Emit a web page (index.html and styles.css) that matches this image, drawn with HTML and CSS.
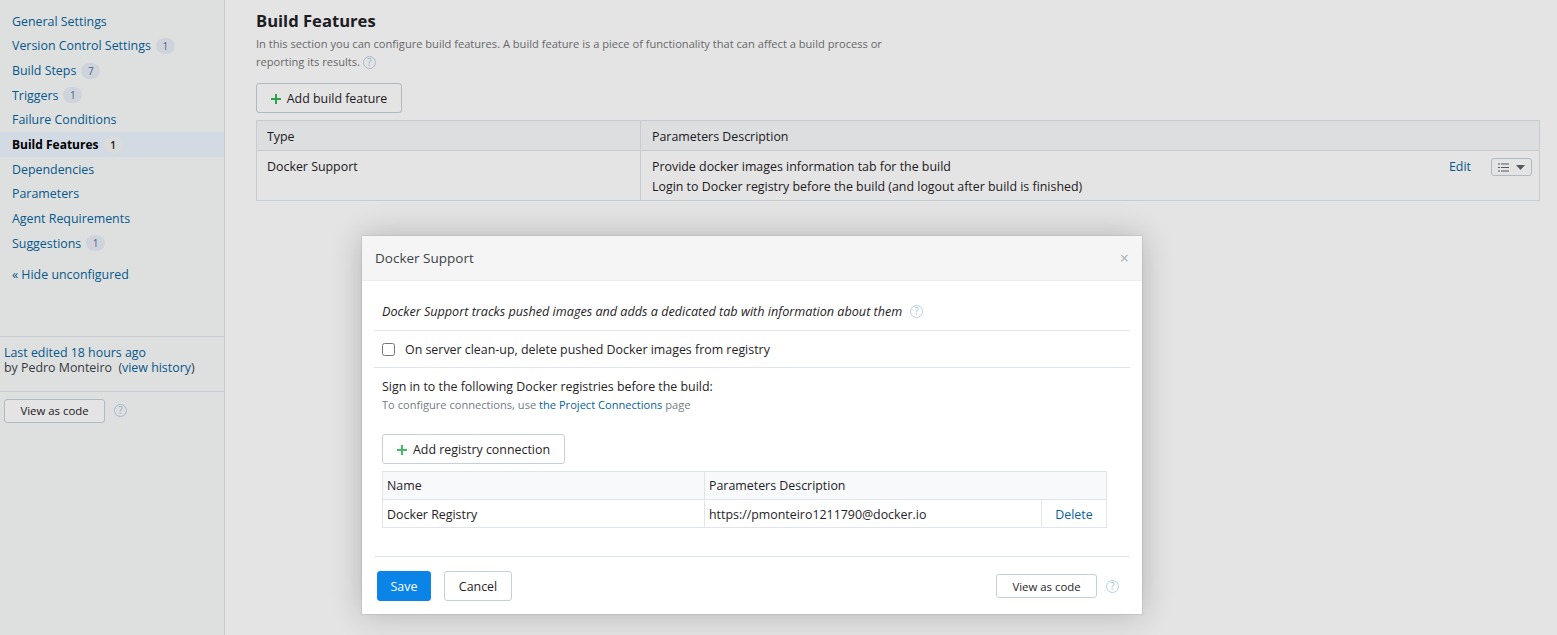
FILE: index.html
```html
<!DOCTYPE html>
<html>
<head>
<meta charset="UTF-8">
<title>Build Features</title>
<link rel="stylesheet" href="styles.css">
</head>
<body>
<div class="page">
    <div class="sidebar">
        <ul class="nav">
            <li><a href="#">General Settings</a></li>
            <li><a href="#">Version Control Settings</a><span class="count">1</span></li>
            <li><a href="#">Build Steps</a><span class="count">7</span></li>
            <li><a href="#">Triggers</a><span class="count">1</span></li>
            <li><a href="#">Failure Conditions</a></li>
            <li class="selected"><a href="#">Build Features</a><span class="count">1</span></li>
            <li><a href="#">Dependencies</a></li>
            <li><a href="#">Parameters</a></li>
            <li><a href="#">Agent Requirements</a></li>
            <li><a href="#">Suggestions</a><span class="count">1</span></li>
        </ul>
        <a href="#" class="hide-link">« Hide unconfigured</a>
        <div class="edited">
            <a href="#">Last edited 18 hours ago</a><br>
            by Pedro Monteiro &nbsp;(<a href="#">view history</a>)
        </div>
        <div class="code-row">
            <button class="btn side-code">View as code</button>
            <span class="help">?</span>
        </div>
    </div>

    <div class="main">
        <h2>Build Features</h2>
        <p class="intro">In this section you can configure build features. A build feature is a piece of functionality that can affect a build process or<br>reporting its results. <span class="help">?</span></p>
        <button class="btn add-feature">
            <svg class="plus" width="10" height="10" viewBox="0 0 10 10"><path d="M5 0v10M0 5h10" stroke="#33b558" stroke-width="2" fill="none"/></svg>Add build feature
        </button>
        <table class="features">
            <tr>
                <th class="type-col">Type</th>
                <th class="desc-col" colspan="3">Parameters Description</th>
            </tr>
            <tr>
                <td class="type-col">Docker Support</td>
                <td class="desc-col">Provide docker images information tab for the build<br>Login to Docker registry before the build (and logout after build is finished)</td>
                <td class="edit-col"><a href="#">Edit</a></td>
                <td class="menu-col">
                    <button class="menu-btn">
                        <svg width="11" height="9" viewBox="0 0 11 9"><path d="M0 1h2M3 1h8M0 4.5h2M3 4.5h8M0 8h2M3 8h8" stroke="#5f6368" stroke-width="1.2" fill="none"/></svg>
                        <svg width="9" height="5" viewBox="0 0 9 5"><path d="M0 0h9L4.5 5z" fill="#5f6368"/></svg>
                    </button>
                </td>
            </tr>
        </table>
    </div>
</div>

<div class="overlay"></div>

<div class="dialog">
    <div class="dialog-head">
        <span class="dialog-title">Docker Support</span>
        <span class="close">×</span>
    </div>
    <div class="dialog-body">
        <div class="section note"><em>Docker Support tracks pushed images and adds a dedicated tab with information about them</em><span class="help">?</span></div>
        <div class="section check">
            <input type="checkbox" id="cleanup">
            <label for="cleanup">On server clean-up, delete pushed Docker images from registry</label>
        </div>
        <div class="section registries">
            <div class="sign-in">Sign in to the following Docker registries before the build:</div>
            <div class="small">To configure connections, use <a href="#">the Project Connections</a> page</div>
            <button class="btn add-registry">
                <svg class="plus" width="10" height="10" viewBox="0 0 10 10"><path d="M5 0v10M0 5h10" stroke="#45bb66" stroke-width="2" fill="none"/></svg>Add registry connection
            </button>
            <table class="connections">
                <tr>
                    <th class="name-col">Name</th>
                    <th colspan="2">Parameters Description</th>
                </tr>
                <tr>
                    <td class="name-col">Docker Registry</td>
                    <td>https://pmonteiro1211790@docker.io</td>
                    <td class="delete-col"><a href="#">Delete</a></td>
                </tr>
            </table>
        </div>
        <div class="dialog-foot">
            <button class="btn save">Save</button>
            <button class="btn cancel">Cancel</button>
            <div class="foot-right">
                <button class="btn foot-code">View as code</button>
                <span class="help">?</span>
            </div>
        </div>
    </div>
</div>
</body>
</html>
```

FILE: styles.css
```css
html, body {
    margin: 0;
    padding: 0;
    height: 100%;
    overflow: hidden;
}
body {
    font-family: "Open Sans", "Noto Sans", Arial, sans-serif;
    font-size: 12.4px;
    color: #1f2328;
    background-color: #fff;
}
a {
    color: #08639c;
    text-decoration: none;
}
.page {
    display: flex;
    height: 635px;
}
.overlay {
    position: absolute;
    top: 0;
    left: 0;
    width: 100%;
    height: 100%;
    background-color: rgba(0,0,0,0.105);
}

/* left column */
.sidebar {
    width: 224px;
    flex: none;
    background-color: #f9fbfb;
    border-right: 1px solid #dfe5eb;
}
.nav {
    list-style: none;
    margin: 0;
    padding: 9px 0 0;
}
.nav li {
    display: flex;
    align-items: center;
    height: 24.67px;
    padding-left: 12px;
}
.nav .selected {
    background-color: #ebf4ff;
}
.nav .selected a {
    color: #000;
    font-weight: 700;
    font-size: 12px;
}
.count {
    margin-left: 5px;
    min-width: 9px;
    padding: 0 5px;
    height: 16px;
    line-height: 16px;
    border-radius: 8px;
    font-size: 10px;
    text-align: center;
    color: #5a6a9a;
    background-color: #e8eef6;
}
.selected .count {
    color: #1f2328;
    background-color: #f5f5f5;
    font-weight: 600;
}
.hide-link {
    display: block;
    margin: 10px 0 0 12px;
}
.edited {
    margin-top: 53px;
    padding: 8px 0 16px 4px;
    border-top: 1px solid #dfe5eb;
    border-bottom: 1px solid #dfe5eb;
    line-height: 15px;
    color: #3d4349;
}
.code-row {
    display: flex;
    align-items: center;
    padding: 7px 0 0 4px;
}
.btn {
    font-family: inherit;
    font-size: 12.4px;
    color: #1f2328;
    background-color: #fff;
    border: 1px solid #c5d0dc;
    border-radius: 3px;
    padding: 0;
    box-sizing: border-box;
}
.side-code {
    width: 101px;
    height: 24px;
    font-size: 11.4px;
}
.help {
    display: inline-block;
    width: 11px;
    height: 11px;
    line-height: 11px;
    border: 1.5px solid #b8d0e8;
    border-radius: 50%;
    font-size: 10px;
    text-align: center;
    color: #a9c4df;
}
.code-row .help {
    margin-left: 9px;
}

/* main column */
.main {
    flex: 1;
    padding: 0 17px 0 31px;
}
h2 {
    margin: 9px 0 0;
    font-size: 16.6px;
    line-height: 24px;
    font-weight: 700;
    color: #1f2328;
}
.intro {
    margin: 2px 0 0;
    font-size: 11.1px;
    line-height: 18px;
    color: #737577;
}
.add-feature {
    display: block;
    width: 146px;
    height: 30px;
    margin-top: 12px;
}
.plus {
    margin-right: 6px;
    vertical-align: -1px;
}
.features {
    width: 100%;
    margin-top: 7px;
    border-collapse: collapse;
    border: 1px solid #dfe5eb;
}
.features th {
    height: 28px;
    padding: 1px 10px 0;
    font-weight: 400;
    text-align: left;
    background-color: #f7f9fa;
    border: 1px solid #dfe5eb;
}
.features td {
    padding: 6px 10px 3px;
    line-height: 20px;
    vertical-align: top;
}
.features .type-col {
    width: 363px;
    border-right: 1px solid #dfe5eb;
}
.features .desc-col {
    padding-left: 11px;
}
.features .edit-col {
    width: 22px;
    padding: 6px 2px 3px 10px;
}
.features .menu-col {
    width: 41px;
    padding: 7px 7px 0 18px;
}
.menu-btn {
    display: flex;
    align-items: center;
    justify-content: center;
    gap: 7px;
    width: 41px;
    height: 18px;
    padding: 0;
    background-color: #fff;
    border: 1px solid #c5d0dc;
    border-radius: 3px;
}

/* dialog */
.dialog {
    position: absolute;
    left: 362px;
    top: 236px;
    width: 780px;
    height: 378px;
    background-color: #fff;
    box-shadow: 0 0 0 1px rgba(0,0,0,0.06), 0 0 30px rgba(0,0,0,0.22);
}
.dialog-head {
    display: flex;
    justify-content: space-between;
    align-items: center;
    height: 44px;
    padding: 0 13px;
    background-color: #f5f5f5;
    border-bottom: 1px solid #ececec;
}
.dialog-title {
    font-size: 13.5px;
    color: #3d4349;
}
.close {
    font-size: 16px;
    color: #a9b0b7;
}
.dialog-body {
    padding: 0 12px;
}
.section {
    border-bottom: 1px solid #dfe5eb;
    padding-left: 8px;
}
.note {
    display: flex;
    align-items: center;
    height: 50px;
    box-sizing: border-box;
    padding-top: 12px;
    font-size: 12.62px;
}
.note .help {
    margin-left: 8px;
}
.check {
    display: flex;
    align-items: center;
    height: 37px;
    box-sizing: border-box;
}
.check input {
    width: 13px;
    height: 13px;
    margin: 0 10px 0 0;
}
.registries {
    height: 189px;
    box-sizing: border-box;
    padding-top: 10px;
    line-height: 18px;
}
.small {
    font-size: 11.1px;
    line-height: 18px;
    color: #737b85;
}
.add-registry {
    display: block;
    width: 183px;
    height: 30px;
    margin-top: 20px;
}
.connections {
    width: 725px;
    margin-top: 7px;
    border-collapse: collapse;
}
.connections th, .connections td {
    height: 27px;
    padding: 0 4px;
    font-weight: 400;
    text-align: left;
    border: 1px solid #dfe5eb;
}
.connections td {
    height: 25px;
    padding-top: 2px;
}
.connections th {
    background-color: #f7f9fa;
}
.connections .name-col {
    width: 313px;
}
.connections .delete-col {
    width: 56px;
    text-align: center;
}
.dialog-foot {
    display: flex;
    align-items: center;
    padding: 14px 0 0 3px;
}
.save {
    width: 54px;
    height: 30px;
    color: #fff;
    background-color: #0a84e6;
    border-color: #0a84e6;
}
.cancel {
    width: 68px;
    height: 30px;
    margin-left: 13px;
}
.foot-right {
    display: flex;
    align-items: center;
    margin-left: auto;
    padding-right: 11px;
}
.foot-code {
    width: 101px;
    height: 24px;
    font-size: 11.4px;
}
.foot-right .help {
    margin-left: 9px;
}
```
